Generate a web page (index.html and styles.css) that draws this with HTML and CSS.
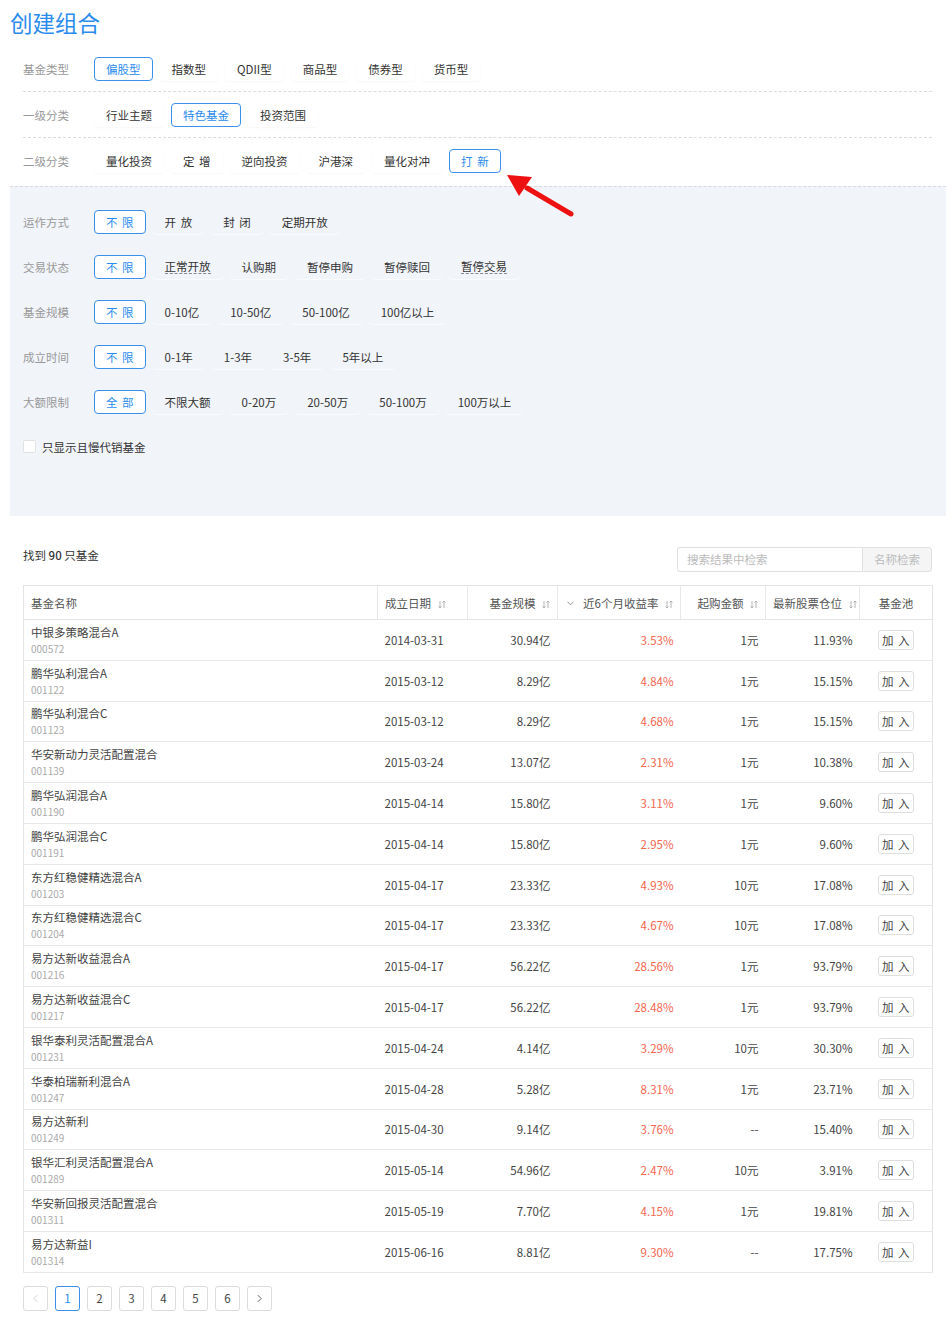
FILE: index.html
```html
<!DOCTYPE html>
<html lang="zh">
<head>
<meta charset="utf-8">
<title>创建组合</title>
<link rel="stylesheet" href="styles.css">
</head>
<body>
<div class="page">
  <h1 class="title">创建组合</h1>

  <div class="filters">
    <div class="frow">
      <div class="flabel">基金类型</div>
      <div class="fopts">
        <span class="btn active">偏股型</span>
        <span class="btn">指数型</span>
        <span class="btn">QDII型</span>
        <span class="btn">商品型</span>
        <span class="btn">债券型</span>
        <span class="btn">货币型</span>
      </div>
    </div>
    <div class="frow">
      <div class="flabel">一级分类</div>
      <div class="fopts">
        <span class="btn">行业主题</span>
        <span class="btn active">特色基金</span>
        <span class="btn">投资范围</span>
      </div>
    </div>
    <div class="frow last">
      <div class="flabel">二级分类</div>
      <div class="fopts">
        <span class="btn">量化投资</span>
        <span class="btn">定 增</span>
        <span class="btn">逆向投资</span>
        <span class="btn">沪港深</span>
        <span class="btn">量化对冲</span>
        <span class="btn active">打 新</span>
      </div>
    </div>
  </div>

  <div class="panel">
    <div class="prow">
      <div class="flabel">运作方式</div>
      <div class="fopts">
        <span class="btn active">不 限</span>
        <span class="btn">开 放</span>
        <span class="btn">封 闭</span>
        <span class="btn">定期开放</span>
      </div>
    </div>
    <div class="prow">
      <div class="flabel">交易状态</div>
      <div class="fopts">
        <span class="btn active">不 限</span>
        <span class="btn"><span class="dash">正常开放</span></span>
        <span class="btn">认购期</span>
        <span class="btn">暂停申购</span>
        <span class="btn">暂停赎回</span>
        <span class="btn"><span class="dash">暂停交易</span></span>
      </div>
    </div>
    <div class="prow">
      <div class="flabel">基金规模</div>
      <div class="fopts">
        <span class="btn active">不 限</span>
        <span class="btn">0-10亿</span>
        <span class="btn">10-50亿</span>
        <span class="btn">50-100亿</span>
        <span class="btn">100亿以上</span>
      </div>
    </div>
    <div class="prow">
      <div class="flabel">成立时间</div>
      <div class="fopts">
        <span class="btn active">不 限</span>
        <span class="btn">0-1年</span>
        <span class="btn">1-3年</span>
        <span class="btn">3-5年</span>
        <span class="btn">5年以上</span>
      </div>
    </div>
    <div class="prow">
      <div class="flabel">大额限制</div>
      <div class="fopts">
        <span class="btn active">全 部</span>
        <span class="btn">不限大额</span>
        <span class="btn">0-20万</span>
        <span class="btn">20-50万</span>
        <span class="btn">50-100万</span>
        <span class="btn">100万以上</span>
      </div>
    </div>
    <div class="prow">
      <label class="check"><span class="box"></span>只显示且慢代销基金</label>
    </div>
  </div>

  <div class="results">
    <div class="rbar">
      <div class="count">找到 <b>90</b> 只基金</div>
      <div class="search">
        <span class="sinput">搜索结果中检索</span>
        <span class="sbtn">名称检索</span>
      </div>
    </div>

    <table class="grid">
      <colgroup>
        <col class="c1"><col class="c2"><col class="c3"><col class="c4"><col class="c5"><col class="c6"><col class="c7">
      </colgroup>
      <thead>
        <tr>
          <th class="l">基金名称</th>
          <th class="l">成立日期 <svg class="sort" viewBox="0 0 8 9"><path d="M2 1v7M0.5 6.5L2 8l1.5-1.5M6 8V1M4.5 2.5L6 1l1.5 1.5"/></svg></th>
          <th class="r">基金规模 <svg class="sort" viewBox="0 0 8 9"><path d="M2 1v7M0.5 6.5L2 8l1.5-1.5M6 8V1M4.5 2.5L6 1l1.5 1.5"/></svg></th>
          <th class="r"><svg class="chev" viewBox="0 0 8 5"><path d="M0.5 0.5L4 4l3.5-3.5"/></svg> 近6个月收益率 <svg class="sort" viewBox="0 0 8 9"><path d="M2 1v7M0.5 6.5L2 8l1.5-1.5M6 8V1M4.5 2.5L6 1l1.5 1.5"/></svg></th>
          <th class="r">起购金额 <svg class="sort" viewBox="0 0 8 9"><path d="M2 1v7M0.5 6.5L2 8l1.5-1.5M6 8V1M4.5 2.5L6 1l1.5 1.5"/></svg></th>
          <th class="r">最新股票仓位 <svg class="sort" viewBox="0 0 8 9"><path d="M2 1v7M0.5 6.5L2 8l1.5-1.5M6 8V1M4.5 2.5L6 1l1.5 1.5"/></svg></th>
          <th class="c">基金池</th>
        </tr>
      </thead>
      <tbody>
        <tr><td><div class="nm">中银多策略混合A</div><div class="cd">000572</div></td><td>2014-03-31</td><td class="r">30.94亿</td><td class="r red">3.53%</td><td class="r">1元</td><td class="r">11.93%</td><td class="c"><span class="add">加 入</span></td></tr>
        <tr><td><div class="nm">鹏华弘利混合A</div><div class="cd">001122</div></td><td>2015-03-12</td><td class="r">8.29亿</td><td class="r red">4.84%</td><td class="r">1元</td><td class="r">15.15%</td><td class="c"><span class="add">加 入</span></td></tr>
        <tr><td><div class="nm">鹏华弘利混合C</div><div class="cd">001123</div></td><td>2015-03-12</td><td class="r">8.29亿</td><td class="r red">4.68%</td><td class="r">1元</td><td class="r">15.15%</td><td class="c"><span class="add">加 入</span></td></tr>
        <tr><td><div class="nm">华安新动力灵活配置混合</div><div class="cd">001139</div></td><td>2015-03-24</td><td class="r">13.07亿</td><td class="r red">2.31%</td><td class="r">1元</td><td class="r">10.38%</td><td class="c"><span class="add">加 入</span></td></tr>
        <tr><td><div class="nm">鹏华弘润混合A</div><div class="cd">001190</div></td><td>2015-04-14</td><td class="r">15.80亿</td><td class="r red">3.11%</td><td class="r">1元</td><td class="r">9.60%</td><td class="c"><span class="add">加 入</span></td></tr>
        <tr><td><div class="nm">鹏华弘润混合C</div><div class="cd">001191</div></td><td>2015-04-14</td><td class="r">15.80亿</td><td class="r red">2.95%</td><td class="r">1元</td><td class="r">9.60%</td><td class="c"><span class="add">加 入</span></td></tr>
        <tr><td><div class="nm">东方红稳健精选混合A</div><div class="cd">001203</div></td><td>2015-04-17</td><td class="r">23.33亿</td><td class="r red">4.93%</td><td class="r">10元</td><td class="r">17.08%</td><td class="c"><span class="add">加 入</span></td></tr>
        <tr><td><div class="nm">东方红稳健精选混合C</div><div class="cd">001204</div></td><td>2015-04-17</td><td class="r">23.33亿</td><td class="r red">4.67%</td><td class="r">10元</td><td class="r">17.08%</td><td class="c"><span class="add">加 入</span></td></tr>
        <tr><td><div class="nm">易方达新收益混合A</div><div class="cd">001216</div></td><td>2015-04-17</td><td class="r">56.22亿</td><td class="r red">28.56%</td><td class="r">1元</td><td class="r">93.79%</td><td class="c"><span class="add">加 入</span></td></tr>
        <tr><td><div class="nm">易方达新收益混合C</div><div class="cd">001217</div></td><td>2015-04-17</td><td class="r">56.22亿</td><td class="r red">28.48%</td><td class="r">1元</td><td class="r">93.79%</td><td class="c"><span class="add">加 入</span></td></tr>
        <tr><td><div class="nm">银华泰利灵活配置混合A</div><div class="cd">001231</div></td><td>2015-04-24</td><td class="r">4.14亿</td><td class="r red">3.29%</td><td class="r">10元</td><td class="r">30.30%</td><td class="c"><span class="add">加 入</span></td></tr>
        <tr><td><div class="nm">华泰柏瑞新利混合A</div><div class="cd">001247</div></td><td>2015-04-28</td><td class="r">5.28亿</td><td class="r red">8.31%</td><td class="r">1元</td><td class="r">23.71%</td><td class="c"><span class="add">加 入</span></td></tr>
        <tr><td><div class="nm">易方达新利</div><div class="cd">001249</div></td><td>2015-04-30</td><td class="r">9.14亿</td><td class="r red">3.76%</td><td class="r">--</td><td class="r">15.40%</td><td class="c"><span class="add">加 入</span></td></tr>
        <tr><td><div class="nm">银华汇利灵活配置混合A</div><div class="cd">001289</div></td><td>2015-05-14</td><td class="r">54.96亿</td><td class="r red">2.47%</td><td class="r">10元</td><td class="r">3.91%</td><td class="c"><span class="add">加 入</span></td></tr>
        <tr><td><div class="nm">华安新回报灵活配置混合</div><div class="cd">001311</div></td><td>2015-05-19</td><td class="r">7.70亿</td><td class="r red">4.15%</td><td class="r">1元</td><td class="r">19.81%</td><td class="c"><span class="add">加 入</span></td></tr>
        <tr><td><div class="nm">易方达新益I</div><div class="cd">001314</div></td><td>2015-06-16</td><td class="r">8.81亿</td><td class="r red">9.30%</td><td class="r">--</td><td class="r">17.75%</td><td class="c"><span class="add">加 入</span></td></tr>
      </tbody>
    </table>

    <div class="pager">
      <span class="pg dis"><svg viewBox="0 0 6 10"><path d="M5 1L1 5l4 4"/></svg></span>
      <span class="pg cur">1</span>
      <span class="pg">2</span>
      <span class="pg">3</span>
      <span class="pg">4</span>
      <span class="pg">5</span>
      <span class="pg">6</span>
      <span class="pg"><svg viewBox="0 0 6 10"><path d="M1 1l4 4-4 4"/></svg></span>
    </div>
  </div>

  <svg class="pointer" viewBox="0 0 80 50" aria-hidden="true">
    <path class="shaft" d="M20 13L64 39"/>
    <path class="head" d="M0 0L25 2L12 21Z"/>
  </svg>
</div>
</body>
</html>
```

FILE: styles.css
```css
* { box-sizing: border-box; }
html, body { margin: 0; padding: 0; background: #fff; }
body {
  font-family: "Noto Sans CJK SC", "Noto Sans", sans-serif;
  font-size: 11.5px;
  color: #333;
  width: 952px;
}
.page { position: relative; padding: 0 6px 0 10px; }

.title {
  margin: 0;
  height: 46px;
  padding-top: 6px;
  font-size: 22.5px;
  line-height: 32px;
  font-weight: 400;
  color: #2b8cf0;
}

.filters { padding: 0 14px 0 13px; margin-bottom: 3px; }
.frow {
  display: flex;
  align-items: center;
  height: 46px;
  border-bottom: 1px dashed #dcdcdc;
}
.frow.last { border-bottom: none; height: 45px; }
.flabel { width: 71px; flex: none; color: #999; line-height: 16px; }
.fopts { display: flex; align-items: center; gap: 7px; }

.btn {
  display: inline-flex;
  align-items: center;
  justify-content: center;
  height: 24px;
  padding: 0 11px;
  border: 1px solid transparent;
  border-radius: 4px;
  color: #333;
  white-space: pre;
  word-spacing: 2px;
  line-height: 16px;
  box-shadow: 0 1px 2px rgba(0, 0, 0, 0.035);
}
.btn.active {
  border-color: #3a90ea;
  color: #2b8cf0;
  background: #fff;
  box-shadow: none;
}
.dash { border-bottom: 1px dashed #888; line-height: 14px; }

.panel {
  background: #f1f4f9;
  border-top: 1px dashed #d6d9de;
  padding: 12px 13px 47px;
}
.prow { display: flex; align-items: center; height: 45px; }
.panel .btn { box-shadow: 0 1px 1px rgba(255, 255, 255, 0.7); }
.panel .btn.active { box-shadow: none; }
.check { display: flex; align-items: center; gap: 6px; color: #333; line-height: 16px; }
.box {
  width: 13px; height: 13px;
  background: #fff;
  border: 1px solid #e2e2e2;
  border-radius: 2px;
}

.results { padding: 31px 14px 30px 13px; }
.rbar { display: flex; align-items: flex-start; justify-content: space-between; height: 25px; }
.count { color: #333; line-height: 16px; }
.count b { font-weight: 500; }
.search { display: flex; height: 25px; }
.sinput {
  width: 185px;
  border: 1px solid #e0e0e0;
  border-right: none;
  border-radius: 3px 0 0 3px;
  padding-left: 9px;
  color: #bbb;
  line-height: 23px;
  background: #fff;
}
.sbtn {
  width: 70px;
  border: 1px solid #e0e0e0;
  border-radius: 0 3px 3px 0;
  background: #f5f5f5;
  color: #bbb;
  text-align: center;
  line-height: 23px;
}

.grid {
  margin-top: 13px;
  width: 909px;
  table-layout: fixed;
  border-collapse: collapse;
  border: 1px solid #e4e4e4;
}
.c1 { width: 354px; } .c2 { width: 90px; } .c3 { width: 90px; } .c4 { width: 123px; }
.c5 { width: 85px; } .c6 { width: 94px; } .c7 { width: 73px; }
.grid th {
  height: 34px;
  font-weight: 400;
  color: #555;
  padding: 0 7px;
  border-right: 1px solid #e8e8e8;
  border-bottom: 1px solid #e4e4e4;
  white-space: nowrap;
  line-height: 16px;
}
.grid th:last-child { border-right: none; }
.grid td {
  height: 40.8px;
  padding: 0 7px;
  border-bottom: 1px solid #e8e8e8;
  color: #444;
  white-space: nowrap;
  line-height: 16px;
}
.grid .l { text-align: left; }
.grid .r { text-align: right; }
.grid .c { text-align: center; }
.grid .red { color: #f3664f; }
.nm { color: #444; line-height: 16px; }
.cd { color: #aaa; font-size: 10px; line-height: 14px; margin-top: 2px; }
.sort { width: 8px; height: 9px; margin-left: 4px; vertical-align: -1px; }
.sort path { fill: none; stroke: #aaa; stroke-width: 0.9; }
.chev { width: 7px; height: 5px; margin-right: 6px; vertical-align: 2px; }
.chev path { fill: none; stroke: #888; stroke-width: 1; }
.add {
  display: inline-block;
  width: 36px;
  height: 20px;
  line-height: 18px;
  border: 1px solid #dedede;
  border-radius: 3px;
  background: #fff;
  color: #444;
  text-align: center;
  white-space: pre;
  word-spacing: 2px;
}

.pager { display: flex; gap: 7px; margin-top: 13px; }
.pg {
  width: 25px; height: 25px;
  display: flex; align-items: center; justify-content: center;
  border: 1px solid #dcdcdc;
  border-radius: 3px;
  color: #444;
  background: #fff;
}
.pg.cur { border-color: #3a90ea; color: #2b8cf0; }
.pg svg { width: 5px; height: 9px; }
.pg svg path { fill: none; stroke: #555; stroke-width: 1.1; }
.pg.dis svg path { stroke: #ccc; }

.pointer {
  position: absolute;
  left: 507px;
  top: 175px;
  width: 80px;
  height: 50px;
  overflow: visible;
}
.pointer .shaft { stroke: #ee1111; stroke-width: 5; stroke-linecap: round; fill: none; }
.pointer .head { fill: #ee1111; }
```
